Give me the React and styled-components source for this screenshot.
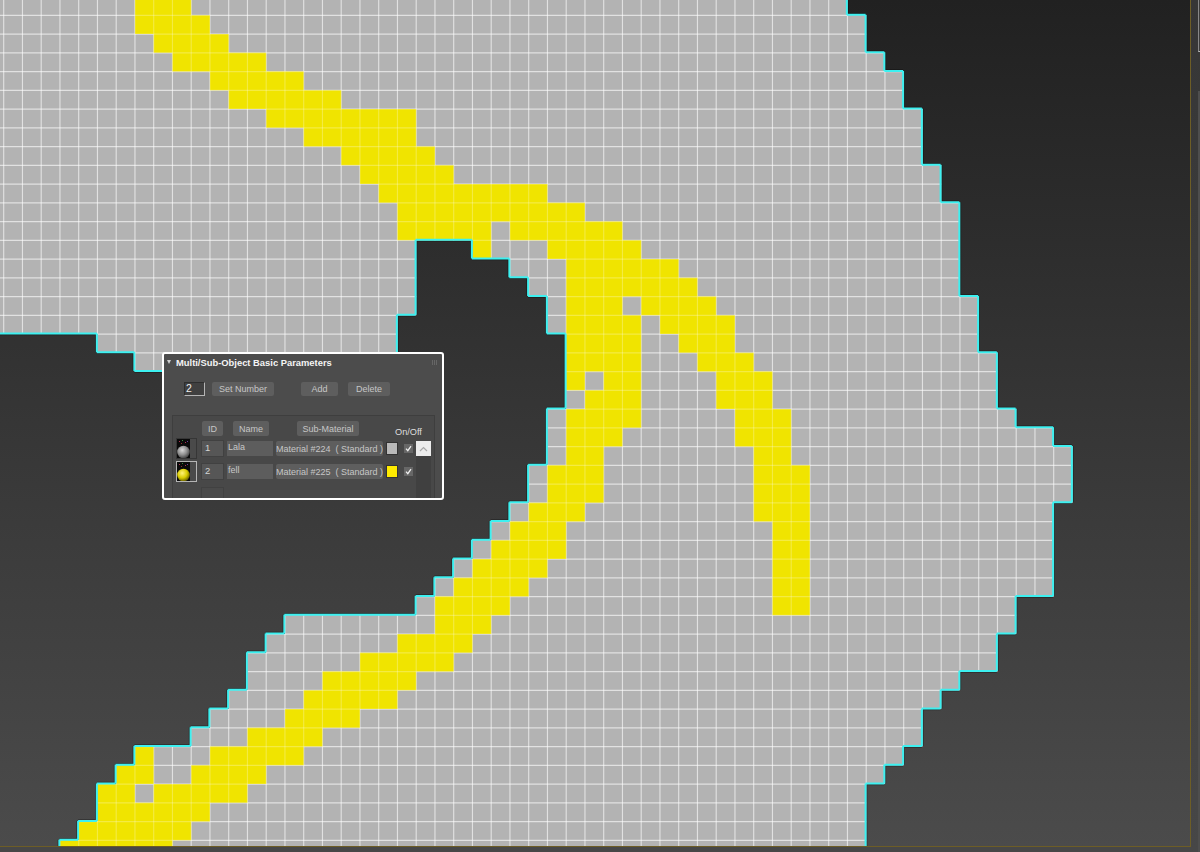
import React from "react";
import styled, { createGlobalStyle } from "styled-components";

const GlobalStyle = createGlobalStyle`
  html, body { margin: 0; padding: 0; background: #474747; overflow: hidden; }
  #root { height: 852px; }
`;

/* mesh grid: cell pitch and where column 0 / row 0 start */
const PITCH = 18.75;
const X0 = 3.7;
const Y0 = 15.3;
const px = (c) => +(X0 + c * PITCH).toFixed(2);
const py = (r) => +(Y0 + r * PITCH).toFixed(2);

// row number -> [from, to) column spans of the grey polygon
const SHAPE = {
  "-1": [[-1, 45]], 0: [[-1, 46]], 1: [[-1, 46]], 2: [[-1, 47]], 3: [[-1, 48]], 4: [[-1, 48]],
  5: [[-1, 49]], 6: [[-1, 49]], 7: [[-1, 49]], 8: [[-1, 50]], 9: [[-1, 50]], 10: [[-1, 51]], 11: [[-1, 51]],
  12: [[-1, 22], [25, 51]], 13: [[-1, 22], [27, 51]], 14: [[-1, 22], [28, 51]],
  15: [[-1, 22], [29, 52]], 16: [[-1, 21], [29, 52]], 17: [[5, 21], [30, 52]], 18: [[7, 21], [30, 53]],
  19: [[30, 53]], 20: [[30, 53]], 21: [[29, 54]], 22: [[29, 56]], 23: [[29, 57]], 24: [[28, 57]], 25: [[28, 57]],
  26: [[27, 56]], 27: [[26, 56]], 28: [[25, 56]], 29: [[24, 56]], 30: [[23, 56]], 31: [[22, 54]], 32: [[15, 54]],
  33: [[14, 53]], 34: [[13, 53]], 35: [[13, 51]], 36: [[12, 50]], 37: [[11, 49]], 38: [[10, 49]], 39: [[7, 48]],
  40: [[6, 47]], 41: [[5, 46]], 42: [[5, 46]], 43: [[4, 46]], 44: [[3, 46]],
};

// same thing for the yellow material
const YELLOW = {
  "-1": [[7, 10]], 0: [[7, 11]], 1: [[8, 12]], 2: [[9, 14]], 3: [[11, 16]], 4: [[12, 18]], 5: [[14, 22]], 6: [[16, 22]],
  7: [[18, 23]], 8: [[19, 24]], 9: [[20, 29]], 10: [[21, 31]], 11: [[21, 26], [27, 33]], 12: [[25, 26], [29, 34]],
  13: [[30, 36]], 14: [[30, 37]], 15: [[30, 33], [34, 38]], 16: [[30, 34], [35, 39]], 17: [[30, 34], [36, 39]],
  18: [[30, 34], [37, 40]], 19: [[30, 31], [32, 34], [38, 41]], 20: [[31, 34], [38, 41]], 21: [[30, 34], [39, 42]],
  22: [[30, 33], [39, 42]], 23: [[30, 32], [40, 42]], 24: [[29, 32], [40, 43]], 25: [[29, 32], [40, 43]],
  26: [[28, 31], [40, 43]], 27: [[27, 30], [41, 43]], 28: [[26, 30], [41, 43]], 29: [[25, 29], [41, 43]],
  30: [[24, 28], [41, 43]], 31: [[23, 27], [41, 43]], 32: [[23, 26]], 33: [[21, 25]], 34: [[19, 24]], 35: [[17, 22]],
  36: [[16, 21]], 37: [[15, 19]], 38: [[13, 17]], 39: [[7, 8], [11, 16]], 40: [[6, 8], [10, 14]],
  41: [[5, 7], [8, 13]], 42: [[5, 11]], 43: [[4, 10]], 44: [[3, 9]],
};

const spansToPath = (table) =>
  Object.entries(table)
    .flatMap(([r, spans]) =>
      spans.map(([a, b]) => `M${px(a)} ${py(+r)}H${px(b)}V${py(+r + 1)}H${px(a)}Z`)
    )
    .join("");

const isFilled = (r, c) => {
  if (r < -1 || r > 44 || c < -1 || c > 60) return true;
  return (SHAPE[r] || []).some(([a, b]) => c >= a && c < b);
};

// walk all cells and keep the sides that touch an empty cell
const outlinePath = () => {
  let d = "";
  for (let r = -1; r <= 44; r++) {
    for (let c = -1; c <= 58; c++) {
      if (!isFilled(r, c)) continue;
      const l = px(c) - 0.6, t = py(r) - 0.6, rr = px(c + 1) - 0.6, b = py(r + 1) - 0.6;
      if (!isFilled(r, c + 1)) d += `M${rr} ${t}V${b}`;
      if (!isFilled(r, c - 1)) d += `M${l} ${t}V${b}`;
      if (!isFilled(r - 1, c)) d += `M${l} ${t}H${rr}`;
      if (!isFilled(r + 1, c)) d += `M${l} ${b}H${rr}`;
    }
  }
  return d;
};

const range = (a, b) => Array.from({ length: b - a + 1 }, (_, i) => a + i);

const GridLines = ({ clip, opacity }) => (
  <g clipPath={`url(#${clip})`} stroke="#fff" strokeWidth="1.15" strokeOpacity={opacity}>
    {range(0, 57).map((c) => (
      <line key={c} x1={px(c)} x2={px(c)} y1="0" y2="846" />
    ))}
    {range(0, 44).map((r) => (
      <line key={r} x1="0" x2="1190" y1={py(r)} y2={py(r)} />
    ))}
  </g>
);

const Shell = styled.div`
  display: grid;
  grid-template-columns: 1191px 9px;
  grid-template-rows: 847px 5px;
  width: 1200px;
  height: 852px;
  background: #474747;
`;

const Viewport = styled.div`
  position: relative;
  grid-column: 1;
  grid-row: 1;
  overflow: hidden;
  box-sizing: border-box;
  border-right: 1px solid #6d5d26;
  border-bottom: 1px solid #6d5d26;
  background: linear-gradient(#212121, #4b4b4b);
`;

const MeshSvg = styled.svg`
  display: block;
`;

const SideStrip = styled.div`
  display: flex;
  flex-direction: column;
  grid-column: 2;
  grid-row: 1 / 3;
  background: linear-gradient(#363636, #474747);
`;

const SideBox = styled.div`
  height: 51px;
  margin: 0 0 39px 7px;
  border-left: 1px solid #888;
  border-bottom: 1px solid #bbb;
  background: #3c3c3c;
`;

const SideRest = styled.div`
  flex: 1;
  margin-left: 7px;
  background: #4e4e4e;
`;

const BottomStrip = styled.div`
  grid-column: 1;
  grid-row: 2;
  background: #474747;
`;

/* floating rollout over the viewport */
const Panel = styled.div`
  position: absolute;
  left: 162px;
  top: 352px;
  width: 282px;
  height: 148px;
  box-sizing: border-box;
  display: flex;
  flex-direction: column;
  overflow: hidden;
  border: 2px solid #fff;
  border-radius: 3px;
  background: #4c4c4c;
  font-family: "Liberation Sans", Arial, sans-serif;
  font-size: 9px;
  color: #c4c4c4;
`;

const TitleBar = styled.div`
  display: flex;
  align-items: center;
  flex: none;
  height: 16px;
  padding: 0 3px 0 3px;
`;

const Caret = styled.span`
  width: 0;
  height: 0;
  margin-right: 5px;
  border-left: 2.5px solid transparent;
  border-right: 2.5px solid transparent;
  border-top: 4px solid #d0d0d0;
`;

const Title = styled.span`
  flex: 1;
  font-size: 9.4px;
  font-weight: 700;
  color: #f4f4f4;
  white-space: nowrap;
`;

const Grip = styled.span`
  width: 6px;
  height: 5px;
  margin-right: 1px;
  background: repeating-linear-gradient(90deg, #666 0 1px, #4c4c4c 1px 2px);
`;

const Toolbar = styled.div`
  display: flex;
  align-items: center;
  flex: none;
  height: 15px;
  margin-top: 11px;
  padding-left: 20px;
`;

const NumberInput = styled.div`
  box-sizing: border-box;
  width: 21px;
  height: 14px;
  padding-left: 1px;
  line-height: 10px;
  font-size: 10.5px;
  color: #eee;
  background: #404040;
  border: 1px solid #2e2e2e;
  border-right-color: #b5b5b5;
  border-bottom-color: #b5b5b5;
`;

const Button = styled.div`
  display: flex;
  align-items: center;
  justify-content: center;
  flex: none;
  width: ${(p) => p.$w}px;
  height: ${(p) => p.$h || 14}px;
  margin-left: ${(p) => p.$ml || 0}px;
  border-radius: 2px;
  background: #5e5e5e;
  color: #c6c6c6;
  white-space: pre;
`;

const ListBox = styled.div`
  flex: 1;
  display: flex;
  flex-direction: column;
  min-height: 0;
  margin: 19px 7px 0 8px;
  border: 1px solid #3e3e3e;
  border-bottom: none;
  background: #484848;
`;

const HeaderRow = styled.div`
  display: flex;
  flex: none;
  height: 16px;
  padding: 5px 0 0 29px;
  align-items: flex-start;
`;

const OnOff = styled.span`
  margin: 6px 0 0 36px;
  font-size: 9.2px;
  color: #dedede;
  white-space: nowrap;
`;

const ListBody = styled.div`
  flex: 1;
  display: flex;
  min-height: 0;
  margin-top: 1px;
`;

const Rows = styled.div`
  flex: 1;
  display: flex;
  flex-direction: column;
  gap: 2px;
  padding-left: 3px;
`;

const Row = styled.div`
  display: flex;
  align-items: center;
  flex: none;
  height: ${(p) => p.$h || 21}px;
`;

const Thumb = styled.svg`
  display: block;
  flex: none;
  border: 1px solid ${(p) => (p.$active ? "#b5b5b5" : "#363636")};
`;

const IdField = styled.div`
  box-sizing: border-box;
  flex: none;
  width: 23px;
  height: 17px;
  margin-left: ${(p) => p.$ml}px;
  padding-left: 3px;
  line-height: 14px;
  color: #d4d4d4;
  font-size: 9.5px;
  background: ${(p) => (p.$empty ? "#4a4a4a" : "#565656")};
  border: 1px solid #414141;
`;

const EmptyRow = styled(Row)`
  align-items: flex-start;
  padding-top: 3px;
`;

const NameField = styled.div`
  box-sizing: border-box;
  flex: none;
  width: 46px;
  height: 15px;
  margin-left: 3px;
  padding-left: 1px;
  line-height: 13px;
  background: #5d5d5d;
  color: #c8c8c8;
`;

const Swatch = styled.div`
  flex: none;
  box-sizing: border-box;
  width: 12px;
  height: 13px;
  margin-left: 3px;
  background: ${(p) => p.$color};
  border: 1px solid #333;
`;

const CheckBox = styled.div`
  display: flex;
  align-items: center;
  justify-content: center;
  flex: none;
  width: 9px;
  height: 9px;
  margin-left: 6px;
  background: #676767;
`;

const ScrollColumn = styled.div`
  flex: none;
  width: 15px;
  margin: 3px 3px 0 0;
  background: #404040;
`;

const ScrollUp = styled.div`
  display: flex;
  align-items: center;
  justify-content: center;
  height: 15px;
  background: #ececec;
`;

const TinyCheck = () => (
  <svg width="7" height="7" viewBox="0 0 7 7" fill="none">
    <path d="M1 3.6 2.8 5.6 6 1.2" stroke="#eee" strokeWidth="1.3" />
  </svg>
);

const MaterialThumb = ({ active, color, shade, light, id }) => (
  <Thumb $active={active} width="19" height="19" viewBox="0 0 19 19">
    <defs>
      <radialGradient id={id} cx="0.4" cy="0.35" r="0.7">
        <stop offset="0" stopColor={light} />
        <stop offset="0.55" stopColor={color} />
        <stop offset="1" stopColor={shade} />
      </radialGradient>
    </defs>
    <rect width="19" height="19" fill="#4a4a4a" />
    <rect width="13" height="19" fill="#0a0a0a" />
    <rect x="2" y="2" width="1" height="1" fill="#b03050" />
    <rect x="5" y="1" width="1" height="1" fill="#3c8a3c" />
    <rect x="8" y="3" width="1" height="1" fill="#b03050" />
    <rect x="10" y="2" width="1" height="1" fill="#6a3c9a" />
    <rect x="4" y="4" width="1" height="1" fill="#8a2a2a" />
    <circle cx="6.5" cy="13" r="6.3" fill={`url(#${id})`} />
  </Thumb>
);

const MaterialRow = ({ index, name, material, color, active, thumb }) => (
  <Row>
    <MaterialThumb active={active} id={`sphere${index}`} {...thumb} />
    <IdField $ml={4}>{index}</IdField>
    <NameField>{name}</NameField>
    <Button $w={107} $h={15} $ml={3}>
      {material}
    </Button>
    <Swatch $color={color} />
    <CheckBox>
      <TinyCheck />
    </CheckBox>
  </Row>
);

export default function App() {
  const grey = spansToPath(SHAPE);
  const yellow = spansToPath(YELLOW);
  const outline = outlinePath();

  return (
    <Shell>
      <GlobalStyle />
      <Viewport>
        <MeshSvg width="1190" height="846" viewBox="0 0 1190 846">
          <defs>
            <clipPath id="greyClip">
              <path d={grey} />
            </clipPath>
            <clipPath id="yellowClip">
              <path d={yellow} />
            </clipPath>
          </defs>
          <path d={outline} fill="none" stroke="#000" strokeOpacity="0.35" strokeWidth="3.6" />
          <path d={grey} fill="#b3b3b3" />
          <GridLines clip="greyClip" opacity="0.6" />
          <path d={yellow} fill="#f0e400" />
          <GridLines clip="yellowClip" opacity="0.26" />
          <path d={outline} fill="none" stroke="#3df0f0" strokeWidth="2" />
        </MeshSvg>

        <Panel>
          <TitleBar>
            <Caret />
            <Title>Multi/Sub-Object Basic Parameters</Title>
            <Grip />
          </TitleBar>
          <Toolbar>
            <NumberInput>2</NumberInput>
            <Button $w={62} $ml={7}>Set Number</Button>
            <Button $w={37} $ml={27}>Add</Button>
            <Button $w={42} $ml={10}>Delete</Button>
          </Toolbar>
          <ListBox>
            <HeaderRow>
              <Button $w={21} $h={15}>ID</Button>
              <Button $w={36} $h={15} $ml={10}>Name</Button>
              <Button $w={62} $h={15} $ml={28}>Sub-Material</Button>
              <OnOff>On/Off</OnOff>
            </HeaderRow>
            <ListBody>
              <Rows>
                <MaterialRow
                  index={1}
                  name="Lala"
                  material="Material #224  ( Standard )"
                  color="#b9b9b9"
                  thumb={{ color: "#8e8e8e", shade: "#3a3a3a", light: "#d8d8d8" }}
                />
                <MaterialRow
                  index={2}
                  name="fell"
                  material="Material #225  ( Standard )"
                  color="#ffeb00"
                  active
                  thumb={{ color: "#d8cc00", shade: "#5a5200", light: "#fff27a" }}
                />
                <EmptyRow $h={14}>
                  <IdField $ml={25} $empty />
                </EmptyRow>
              </Rows>
              <ScrollColumn>
                <ScrollUp>
                  <svg width="9" height="6" viewBox="0 0 9 6" fill="none">
                    <path d="M1 5 4.5 1.6 8 5" stroke="#a8a8a8" strokeWidth="1.2" />
                  </svg>
                </ScrollUp>
              </ScrollColumn>
            </ListBody>
          </ListBox>
        </Panel>
      </Viewport>
      <SideStrip>
        <SideBox />
        <SideRest />
      </SideStrip>
      <BottomStrip />
    </Shell>
  );
}
